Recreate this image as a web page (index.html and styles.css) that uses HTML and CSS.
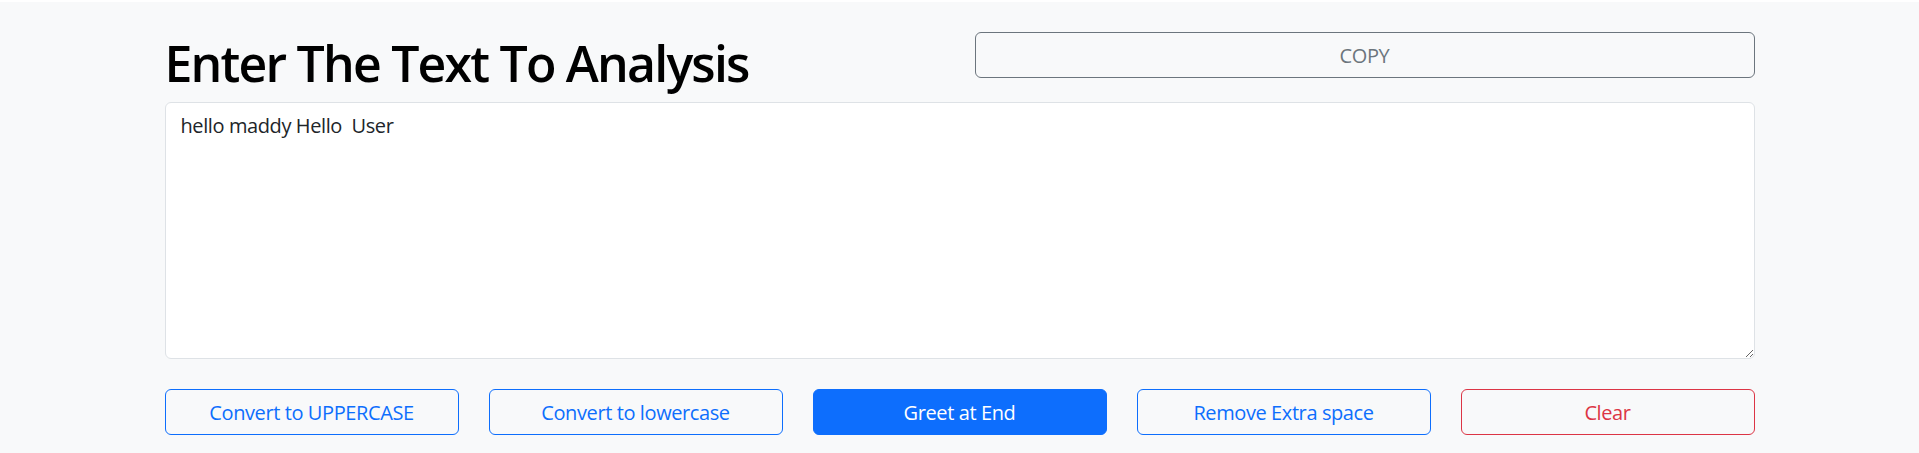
FILE: index.html
```html
<!DOCTYPE html>
<html lang="en">
<head>
<meta charset="utf-8">
<title>TextUtils</title>
<link rel="stylesheet" href="styles.css">
</head>
<body>
<div class="topline"></div>
<main class="container">
  <div class="top">
    <h1 class="title">Enter The Text To Analysis</h1>
    <button class="btn btn-outline-secondary copy">COPY</button>
  </div>
  <textarea class="text-box" rows="10">hello maddy Hello  User</textarea>
  <div class="actions">
    <button class="btn btn-outline-primary">Convert to UPPERCASE</button>
    <button class="btn btn-outline-primary">Convert to lowercase</button>
    <button class="btn btn-primary">Greet at End</button>
    <button class="btn btn-outline-primary">Remove Extra space</button>
    <button class="btn btn-outline-danger">Clear</button>
  </div>
</main>
</body>
</html>
```
FILE: styles.css
```css
* { box-sizing: border-box; }
html, body { margin: 0; padding: 0; }
body {
  background: #f8f9fa;
  color: #212529;
  font-family: "Open Sans", "Noto Sans", sans-serif;
  font-size: 20px;
  line-height: 1.5;
  height: 453px;
  overflow: hidden;
}
.topline { height: 2px; background: #ffffff; }
.container {
  width: 1590px;
  margin: 0 auto;
  padding-top: 30px;
}
.top {
  display: grid;
  grid-template-columns: 795px 1fr;
  column-gap: 15px;
  align-items: start;
}
.title {
  margin: 1px 0 0 0;
  font-size: 50px;
  font-weight: 600;
  line-height: 60px;
  color: #000;
  letter-spacing: -1.8px;
}
.btn {
  font-family: inherit;
  font-size: 20px;
  line-height: 30px;
  letter-spacing: -0.4px;
  height: 46px;
  border-radius: 6px;
  border: 1px solid transparent;
  background: transparent;
  padding: 2px 15px 0;
  cursor: pointer;
}
.copy { width: 100%; }
.btn-outline-secondary { color: #6c757d; border-color: #6c757d; }
.btn-outline-primary { color: #0d6efd; border-color: #0d6efd; }
.btn-outline-danger { color: #dc3545; border-color: #dc3545; }
.btn-primary { color: #fff; background: #0d6efd; border-color: #0d6efd; }
.text-box {
  display: block;
  width: 100%;
  height: 257px;
  margin-top: 9px;
  padding: 8px 15px 7px;
  font-family: inherit;
  font-size: 20px;
  line-height: 30px;
  letter-spacing: -0.4px;
  color: #212529;
  background: #fff;
  border: 1px solid #dee2e6;
  border-radius: 6px;
  outline: none;
}
.actions {
  display: grid;
  grid-template-columns: repeat(5, 1fr);
  column-gap: 30px;
  margin-top: 30px;
}
```
